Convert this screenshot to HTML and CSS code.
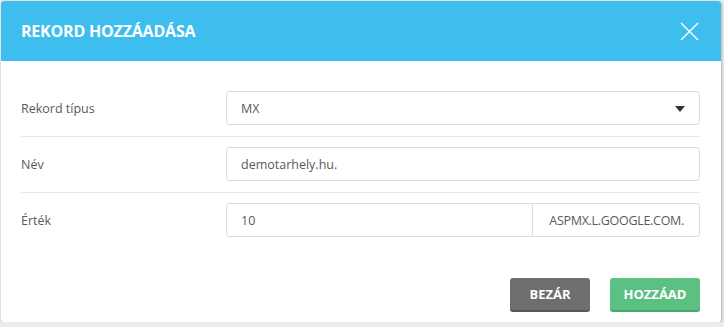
FILE: index.html
```html
<!DOCTYPE html>
<html lang="hu">
<head>
    <meta charset="UTF-8">
    <meta name="viewport" content="width=device-width, initial-scale=1.0">
    <title>Rekord hozzáadása</title>
    <link rel="stylesheet" href="styles.css">
</head>
<body>
    <div class="modal">
        <div class="modal-header">
            <h2>Rekord hozzáadása</h2>
            <button type="button" class="close-button" aria-label="Bezár">
                <svg width="19" height="19" viewBox="0 0 19 19" fill="none" stroke="#fff" stroke-width="1.4"><path d="M1 1l17 17M18 1L1 18"/></svg>
            </button>
        </div>

        <form class="modal-body" onsubmit="event.preventDefault();">
            <div class="form-row">
                <label for="type">Rekord típus</label>
                <div class="select-wrapper">
                    <select id="type" class="form-input">
                        <option>MX</option>
                    </select>
                    <span class="caret"></span>
                </div>
            </div>
            <div class="form-row">
                <label for="name">Név</label>
                <input type="text" id="name" class="form-input" value="demotarhely.hu.">
            </div>
            <div class="form-row">
                <label for="value">Érték</label>
                <div class="input-group">
                    <input type="text" id="value" class="form-input" value="10">
                    <span class="input-addon">ASPMX.L.GOOGLE.COM.</span>
                </div>
            </div>
        </form>

        <div class="modal-footer">
            <button type="button" class="btn btn-close">Bezár</button>
            <button type="button" class="btn btn-add">Hozzáad</button>
        </div>
    </div>
</body>
</html>
```

FILE: styles.css
```css
:root {
    --primary: #3dbeef;
    --text: #5a5a5a;
    --border: #dcdcdc;
    --line: #e8e8e8;
}

* {
    box-sizing: border-box;
    margin: 0;
    padding: 0;
}

body {
    font-family: 'Open Sans', 'Noto Sans', sans-serif;
    background: #ececec;
    padding: 1px 0 0 1px;
    color: var(--text);
}

.modal {
    width: 720px;
    height: 321px;
    background: #fff;
    border-radius: 3px;
    overflow: hidden;
    box-shadow: 1px 1px 3px rgba(0, 0, 0, 0.25);
}

.modal-header {
    height: 60px;
    background: var(--primary);
    display: flex;
    align-items: center;
    justify-content: space-between;
    padding: 0 22px 0 20px;
}

.modal-header h2 {
    color: #fff;
    font-size: 16px;
    font-weight: 700;
    text-transform: uppercase;
    letter-spacing: -0.2px;
}

.close-button {
    background: none;
    border: none;
    display: flex;
    cursor: pointer;
}

.modal-body {
    padding: 20px 21px 0 20px;
}

.form-row {
    display: grid;
    grid-template-columns: 205px 1fr;
    align-items: center;
    padding: 10px 0 11px;
    border-bottom: 1px solid var(--line);
}

.form-row:last-child {
    border-bottom: none;
}

.form-row label {
    font-size: 12.5px;
}

.form-input {
    width: 100%;
    height: 34px;
    padding: 0 14px;
    border: 1px solid var(--border);
    border-radius: 3px;
    background: #fff;
    font-family: inherit;
    font-size: 12.5px;
    color: var(--text);
    outline: none;
}

select.form-input {
    appearance: none;
}

.select-wrapper {
    position: relative;
}

.caret {
    position: absolute;
    right: 15px;
    top: 15px;
    border-left: 5px solid transparent;
    border-right: 5px solid transparent;
    border-top: 6px solid #333;
}

.input-group {
    display: flex;
}

.input-group .form-input {
    border-radius: 3px 0 0 3px;
}

.input-addon {
    display: flex;
    align-items: center;
    height: 34px;
    padding: 0 15px 0 16px;
    border: 1px solid var(--border);
    border-left: none;
    border-radius: 0 3px 3px 0;
    font-size: 12.5px;
    letter-spacing: -0.3px;
    white-space: nowrap;
}

.modal-footer {
    display: flex;
    justify-content: flex-end;
    gap: 20px;
    padding: 30px 21px 0 20px;
}

.btn {
    height: 34px;
    border: none;
    border-radius: 3px;
    color: #fff;
    font-family: inherit;
    font-size: 13px;
    font-weight: 700;
    text-transform: uppercase;
    cursor: pointer;
}

.btn-close {
    width: 80px;
    background: #6d6e6d;
    border-bottom: 2px solid #575857;
}

.btn-add {
    width: 90px;
    background: #5cc082;
    border-bottom: 2px solid #49a86d;
}
```
